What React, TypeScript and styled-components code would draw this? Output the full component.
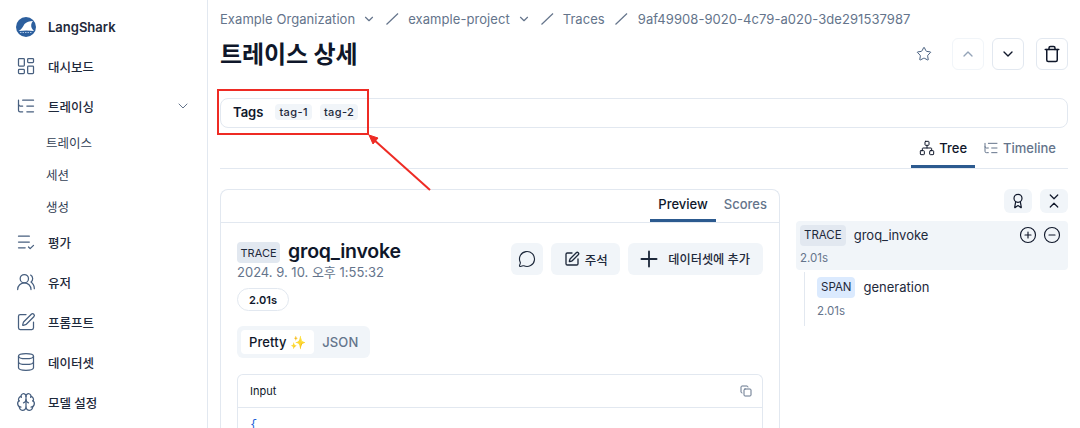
import React from 'react';
import styled, { createGlobalStyle } from 'styled-components';
import {
  Award,
  Brain,
  ChevronDown,
  ChevronUp,
  ChevronsDownUp,
  CircleMinus,
  CirclePlus,
  Copy,
  Database,
  LayoutDashboard,
  ListCheck,
  ListTree,
  MessageCircle,
  Network,
  Plus,
  SquarePen,
  Star,
  Trash,
  UsersRound,
} from 'lucide-react';

const GlobalStyle = createGlobalStyle`
  html, body {
    margin: 0;
    height: 428px;
    overflow: hidden;
    background: #fff;
  }
  * { box-sizing: border-box; }
  body {
    font-family: Inter, "Noto Sans CJK KR", "Noto Sans", sans-serif;
    color: #0f172a;
  }
`;

const Page = styled.div`
  position: relative;
  display: flex;
  width: 1080px;
  height: 428px;
  overflow: hidden;
`;

/* sidebar */
const Sidebar = styled.aside`
  flex: 0 0 208px;
  height: 428px;
  border-right: 1px solid #e2e8f0;
  padding: 7px 8px 0 8px;
`;

const Brand = styled.div`
  display: flex;
  align-items: center;
  height: 39px;
  padding-left: 8px;
  gap: 12px;
  font-size: 13px;
  font-weight: 600;
  color: #1e293b;
`;

const NavRow = styled.div`
  display: flex;
  align-items: center;
  height: 40px;
  padding-left: 8px;
  gap: 12px;
  font-size: 12.500px;
  font-weight: 500;
  color: #1e293b;
  svg { color: #475f7f; flex: none; }
`;

const NavChevron = styled.span`
  display: flex;
  margin-left: auto;
  margin-right: 8px;
  svg { color: #64748b; }
`;

const SubRow = styled.div`
  display: flex;
  align-items: center;
  height: 32px;
  padding-left: 38px;
  font-size: 12.500px;
  color: #334155;
`;

/* main column */
const Main = styled.main`
  flex: 1;
  min-width: 0;
  padding: 0 12px;
`;

const Breadcrumb = styled.nav`
  display: flex;
  align-items: center;
  height: 38px;
  font-size: 13px;
  letter-spacing: 0.06px;
  color: #64748b;
  white-space: nowrap;
`;

const CrumbItem = styled.span<{ $nudge?: number }>`
  display: flex;
  align-items: center;
  gap: 7px;
  margin-left: ${({ $nudge }) => $nudge ?? 0}px;
`;

const CrumbSlash = styled.svg`
  margin: 0 9px;
  flex: none;
`;

const TitleRow = styled.div`
  display: flex;
  align-items: center;
  height: 32px;
`;

const Title = styled.h1`
  margin: 0;
  padding-bottom: 4px;
  font-size: 24px;
  font-weight: 700;
  letter-spacing: -0.1px;
  color: #0f172a;
  flex: 1;
`;

const StarWrap = styled.span`
  display: flex;
  margin-right: 20px;
  color: #475f7f;
`;

const SquareButton = styled.button<{ $faded?: boolean; $gap?: number }>`
  display: flex;
  align-items: center;
  justify-content: center;
  width: 32px;
  height: 32px;
  padding: 0;
  margin-left: ${({ $gap }) => $gap ?? 0}px;
  background: #fff;
  border: 1px solid ${({ $faded }) => ($faded ? '#f1f5f9' : '#e2e8f0')};
  border-radius: 6px;
  color: ${({ $faded }) => ($faded ? '#94a3b8' : '#0f172a')};
`;

const TagsCard = styled.div`
  display: flex;
  align-items: center;
  height: 30px;
  margin-top: 28px;
  padding: 0 0 2px 12px;
  border: 1px solid #e2e8f0;
  border-radius: 8px;
`;

const TagsLabel = styled.span`
  font-size: 13px;
  font-weight: 600;
  margin-right: 12px;
`;

const Tag = styled.span`
  display: inline-flex;
  align-items: center;
  height: 16px;
  padding: 0 4px;
  margin-right: 8px;
  background: #f1f5f9;
  border-radius: 4px;
  font-size: 11px;
  font-weight: 500;
  letter-spacing: 0.4px;
  color: #1e293b;
`;

const ViewTabs = styled.div`
  display: flex;
  justify-content: flex-end;
  height: 41px;
  padding-right: 4px;
  border-bottom: 1px solid #e2e8f0;
`;

const ViewTab = styled.div<{ $active?: boolean }>`
  display: flex;
  align-items: center;
  gap: 4px;
  height: 40px;
  padding: 3px 8px 0 8px;
  font-size: 13px;
  font-weight: 500;
  color: ${({ $active }) => ($active ? '#0f172a' : '#64748b')};
  border-bottom: 3px solid ${({ $active }) => ($active ? '#2c5a8f' : 'transparent')};
`;

const Columns = styled.div`
  display: flex;
  margin-top: 20px;
`;

/* trace preview card */
const PreviewCard = styled.section`
  flex: 0 0 560px;
  height: 260px;
  border: 1px solid #e2e8f0;
  border-bottom: none;
  border-radius: 8px 8px 0 0;
`;

const PreviewTabs = styled.div`
  display: flex;
  justify-content: flex-end;
  height: 33px;
  padding-right: 4px;
  border-bottom: 1px solid #e2e8f0;
`;

const PreviewTab = styled.div<{ $active?: boolean }>`
  display: flex;
  align-items: center;
  height: 32px;
  padding: 0 8px 2px;
  font-size: 13px;
  font-weight: 500;
  color: ${({ $active }) => ($active ? '#0f172a' : '#64748b')};
  border-bottom: 3px solid ${({ $active }) => ($active ? '#2c5a8f' : 'transparent')};
`;

const PreviewBody = styled.div`
  padding: 19px 16px 0 16px;
`;

const HeaderRow = styled.div`
  display: flex;
  justify-content: space-between;
  align-items: flex-start;
`;

const NameLine = styled.div`
  display: flex;
  align-items: center;
  gap: 8px;
  height: 21px;
`;

const TypeBadge = styled.span<{ $blue?: boolean }>`
  display: inline-flex;
  align-items: center;
  height: 21px;
  padding: 0 4px;
  border-radius: 4px;
  font-size: 11.500px;
  color: #1e293b;
  background: ${({ $blue }) => ($blue ? '#dbeafe' : '#e2e8f0')};
`;

const HeaderBadge = styled(TypeBadge)`
  font-size: 11px;
  padding: 0 3.500px;
`;

const TraceName = styled.span`
  padding-bottom: 4px;
  font-size: 19.500px;
  font-weight: 600;
  letter-spacing: -0.2px;
`;

const Timestamp = styled.div`
  margin-top: 1px;
  font-size: 13px;
  line-height: 16px;
  color: #64748b;
`;

const LatencyPill = styled.span`
  display: inline-flex;
  align-items: center;
  height: 23px;
  margin-top: 8px;
  padding: 0 11px;
  border: 1px solid #e2e8f0;
  border-radius: 12px;
  font-size: 11px;
  font-weight: 600;
`;

const Actions = styled.div`
  display: flex;
  gap: 8px;
  margin-top: 1px;
`;

const ActionButton = styled.button<{ $wide?: boolean; $icon?: boolean }>`
  display: flex;
  align-items: center;
  gap: ${({ $wide }) => ($wide ? '6px' : '5px')};
  height: 32px;
  padding: ${({ $wide, $icon }) => ($wide ? '0 13px 0 8px' : $icon ? '0 7px' : '0 12.500px')};
  background: #f1f5f9;
  border: none;
  border-radius: 6px;
  font-family: inherit;
  font-size: ${({ $wide }) => ($wide ? '12.200px' : '12.500px')};
  font-weight: 500;
  color: #1e293b;
`;

const Toggle = styled.div`
  display: inline-flex;
  height: 32px;
  margin-top: 15px;
  padding: 4px;
  background: #f1f5f9;
  border-radius: 6px;
  font-size: 13px;
  font-weight: 500;
`;

const ToggleOption = styled.span<{ $active?: boolean }>`
  display: flex;
  align-items: center;
  padding: 0 8px;
  letter-spacing: 0.1px;
  border-radius: 4px;
  background: ${({ $active }) => ($active ? '#fff' : 'transparent')};
  color: ${({ $active }) => ($active ? '#0f172a' : '#64748b')};
`;

const InputBox = styled.div`
  margin-top: 16px;
  border: 1px solid #e2e8f0;
  border-bottom: none;
  border-radius: 6px 6px 0 0;
`;

const InputHead = styled.div`
  display: flex;
  align-items: center;
  justify-content: space-between;
  height: 33px;
  padding: 0 10px 0 12px;
  border-bottom: 1px solid #e2e8f0;
  font-size: 11px;
  font-weight: 400;
  svg { color: #64748b; }
`;

const CodeLine = styled.div`
  padding: 9px 12px 0;
  font-family: "Liberation Mono", monospace;
  font-size: 12px;
  line-height: 16px;
  color: #1d5fd8;
`;

/* tree panel */
const TreePanel = styled.section`
  flex: 1;
  min-width: 0;
  margin-left: 16px;
`;

const TreeTools = styled.div`
  display: flex;
  justify-content: flex-end;
  gap: 8px;
  height: 32px;
`;

const ToolButton = styled.button`
  display: flex;
  align-items: center;
  justify-content: center;
  width: 28px;
  height: 24px;
  padding: 0;
  background: #f1f5f9;
  border: none;
  border-radius: 6px;
  color: #0f172a;
`;

const TraceNode = styled.div`
  height: 49px;
  padding: 4px;
  background: #f1f5f9;
  border-radius: 4px;
`;

const NodeLine = styled.div`
  display: flex;
  align-items: center;
  gap: 8px;
  height: 20px;
  font-size: 13px;
  color: #1e293b;
`;

const NodeActions = styled.span`
  display: flex;
  gap: 6px;
  margin-left: auto;
  margin-right: 3px;
  color: #0f172a;
`;

const NodeMeta = styled.div`
  margin-top: 6px;
  font-size: 11.500px;
  line-height: 14px;
  color: #64748b;
`;

const ChildNodes = styled.div`
  margin: 2px 0 0 8px;
  height: 54px;
  padding: 5px 0 0 12px;
  border-left: 1px solid #e2e8f0;
  ${NodeMeta} { margin-top: 7px; }
`;

/* annotation drawn over the screenshot */
const Annotation = styled.svg`
  position: absolute;
  left: 0;
  top: 0;
  pointer-events: none;
`;

const Logo = () => (
  <svg width="20" height="20" viewBox="0 0 20 20">
    <circle cx="10" cy="10" r="10" fill="#2c5f9e" />
    <path d="M2.500 14C5.500 12.500 7 9.500 8.500 7 10.500 5 13.500 4 17 4c-1.800 2-2.300 4.500-1.300 7 .8 1.300 1.600 2.300 2.300 3-4.500-.8-10.500-.8-15.500 0z" fill="#fff" />
    <path d="M4 15.500h12" stroke="#a9c4e4" strokeWidth="1" strokeDasharray="1.500 1" />
  </svg>
);

const Slash = () => (
  <CrumbSlash width="14" height="14" viewBox="0 0 14 14">
    <path d="M13 1.500 1.500 12.500" stroke="#64748b" strokeWidth="1.200" fill="none" />
  </CrumbSlash>
);

const App: React.FC = () => (
  <Page>
    <GlobalStyle />
    <Sidebar>
      <Brand>
        <Logo />
        LangShark
      </Brand>
      <NavRow><LayoutDashboard size={20} strokeWidth={1.5} />대시보드</NavRow>
      <NavRow>
        <ListTree size={20} strokeWidth={1.5} />트레이싱
        <NavChevron><ChevronDown size={16} strokeWidth={1.5} /></NavChevron>
      </NavRow>
      <SubRow>트레이스</SubRow>
      <SubRow>세션</SubRow>
      <SubRow>생성</SubRow>
      <NavRow><ListCheck size={20} strokeWidth={1.5} />평가</NavRow>
      <NavRow><UsersRound size={20} strokeWidth={1.5} />유저</NavRow>
      <NavRow><SquarePen size={20} strokeWidth={1.5} />프롬프트</NavRow>
      <NavRow><Database size={20} strokeWidth={1.5} />데이터셋</NavRow>
      <NavRow><Brain size={20} strokeWidth={1.5} />모델 설정</NavRow>
    </Sidebar>

    <Main>
      <Breadcrumb>
        <CrumbItem>Example Organization <ChevronDown size={14} /></CrumbItem>
        <Slash />
        <CrumbItem>example-project <ChevronDown size={14} /></CrumbItem>
        <Slash />
        <CrumbItem>Traces</CrumbItem>
        <Slash />
        <CrumbItem $nudge={1}>9af49908-9020-4c79-a020-3de291537987</CrumbItem>
      </Breadcrumb>

      <TitleRow>
        <Title>트레이스 상세</Title>
        <StarWrap><Star size={16} strokeWidth={1.5} /></StarWrap>
        <SquareButton $faded><ChevronUp size={16} /></SquareButton>
        <SquareButton $gap={8}><ChevronDown size={16} /></SquareButton>
        <SquareButton $gap={12}><Trash size={18} /></SquareButton>
      </TitleRow>

      <TagsCard>
        <TagsLabel>Tags</TagsLabel>
        <Tag>tag-1</Tag>
        <Tag>tag-2</Tag>
      </TagsCard>

      <ViewTabs>
        <ViewTab $active><Network size={16} strokeWidth={1.5} />Tree</ViewTab>
        <ViewTab><ListTree size={16} strokeWidth={1.5} />Timeline</ViewTab>
      </ViewTabs>

      <Columns>
        <PreviewCard>
          <PreviewTabs>
            <PreviewTab $active>Preview</PreviewTab>
            <PreviewTab>Scores</PreviewTab>
          </PreviewTabs>
          <PreviewBody>
            <HeaderRow>
              <div>
                <NameLine>
                  <HeaderBadge>TRACE</HeaderBadge>
                  <TraceName>groq_invoke</TraceName>
                </NameLine>
                <Timestamp>2024. 9. 10. 오후 1:55:32</Timestamp>
                <LatencyPill>2.01s</LatencyPill>
              </div>
              <Actions>
                <ActionButton $icon><MessageCircle size={18} strokeWidth={1.5} /></ActionButton>
                <ActionButton><SquarePen size={16} />주석</ActionButton>
                <ActionButton $wide><Plus size={26} strokeWidth={1.7} />데이터셋에 추가</ActionButton>
              </Actions>
            </HeaderRow>
            <Toggle>
              <ToggleOption $active>Pretty ✨</ToggleOption>
              <ToggleOption>JSON</ToggleOption>
            </Toggle>
            <InputBox>
              <InputHead>Input<Copy size={12} /></InputHead>
              <CodeLine>{'{'}</CodeLine>
            </InputBox>
          </PreviewBody>
        </PreviewCard>

        <TreePanel>
          <TreeTools>
            <ToolButton><Award size={16} strokeWidth={1.8} /></ToolButton>
            <ToolButton><ChevronsDownUp size={18} strokeWidth={1.6} /></ToolButton>
          </TreeTools>
          <TraceNode>
            <NodeLine>
              <TypeBadge>TRACE</TypeBadge>groq_invoke
              <NodeActions>
                <CirclePlus size={18} strokeWidth={1.5} />
                <CircleMinus size={18} strokeWidth={1.5} />
              </NodeActions>
            </NodeLine>
            <NodeMeta>2.01s</NodeMeta>
          </TraceNode>
          <ChildNodes>
            <NodeLine><TypeBadge $blue>SPAN</TypeBadge>generation</NodeLine>
            <NodeMeta>2.01s</NodeMeta>
          </ChildNodes>
        </TreePanel>
      </Columns>
    </Main>

    <Annotation width="1080" height="428" viewBox="0 0 1080 428">
      <rect x="218" y="90" width="150" height="44" fill="none" stroke="#ee2b24" strokeWidth="2" />
      <path d="M430 190 373 139" stroke="#ee2b24" strokeWidth="2" fill="none" />
      <path d="M369 135l9 3-5 6z" fill="#ee2b24" stroke="#ee2b24" strokeWidth="1" />
    </Annotation>
  </Page>
);

export default App;
